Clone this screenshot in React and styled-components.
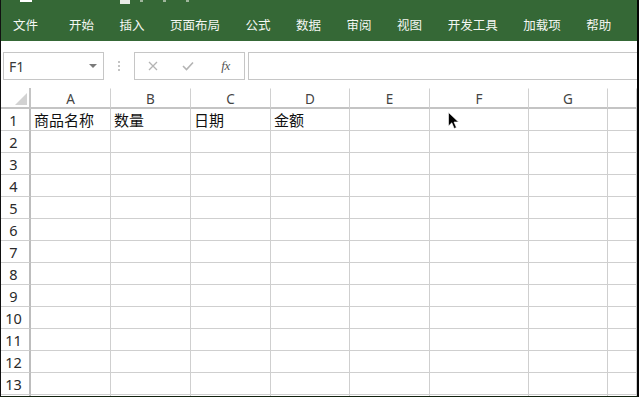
import React from "react";
import styled, { createGlobalStyle } from "styled-components";

const Global = createGlobalStyle`
  *, *::before, *::after { box-sizing: border-box; }
  html, body { margin: 0; padding: 0; background: #fff; overflow: hidden; }
  body { font-family: "Noto Sans", "Noto Sans CJK SC", sans-serif; }
`;

const Frame = styled.div`
  position: relative;
  width: 639px;
  height: 397px;
  overflow: hidden;
  display: flex;
  flex-direction: column;
  border-left: 1px solid #111;
  border-right: 2px solid #050505;
  border-bottom: 1px solid #12220f;
  background: #fff;
`;

const Ribbon = styled.div`
  height: 41px;
  flex: none;
  background: #356836;
  display: flex;
  flex-direction: column;
`;

const Qat = styled.div`
  height: 4px;
  display: flex;
  align-items: flex-start;
  padding-left: 17px;
`;

const QatMark = styled.span`
  display: block;
  width: ${(p) => p.$w}px;
  height: ${(p) => p.$h}px;
  margin-left: ${(p) => p.$ml}px;
  background: ${(p) => p.$c || "#ffffff"};
`;

const Tabs = styled.div`
  flex: 1;
  display: flex;
  align-items: center;
  padding: 4px 0 0 12px;
  gap: 25.5px;
`;

const Tab = styled.span`
  font-family: "Noto Sans CJK SC", sans-serif;
  font-size: 12.5px;
  line-height: 16px;
  color: #f4f7f3;
  white-space: nowrap;
  margin-right: ${(p) => (p.$file ? "5.5px" : "0")};
`;

const FormulaRow = styled.div`
  height: 47px;
  flex: none;
  display: flex;
  align-items: flex-start;
  padding: 11px 0 0 2px;
`;

const NameBox = styled.div`
  width: 101px;
  height: 28px;
  border: 1px solid #c6c6c6;
  display: flex;
  align-items: center;
  justify-content: space-between;
  padding: 0 6px 0 5px;
  font-family: "Noto Sans", sans-serif;
  font-size: 14px;
  color: #3a3a3a;
`;

const Caret = styled.span`
  width: 0;
  height: 0;
  border-left: 4px solid transparent;
  border-right: 4px solid transparent;
  border-top: 4px solid #7a7a7a;
`;

const Dots = styled.div`
  width: 30px;
  height: 28px;
  display: flex;
  flex-direction: column;
  align-items: center;
  justify-content: center;
  gap: 2px;
`;

const Dot = styled.span`
  width: 2px;
  height: 2px;
  background: #c4c4c4;
`;

const FxBox = styled.div`
  width: 111px;
  height: 28px;
  border: 1px solid #c6c6c6;
  display: flex;
  align-items: center;
  padding-left: 12px;
`;

const FxButton = styled.span`
  width: ${(p) => p.$w}px;
  display: flex;
  justify-content: center;
  align-items: center;
`;

const FxText = styled.span`
  font-family: "Liberation Serif", serif;
  font-style: italic;
  font-size: 13px;
  color: #555;
  letter-spacing: -0.5px;
`;

const FormulaInput = styled.div`
  flex: 1;
  height: 28px;
  margin-left: 3px;
  border: 1px solid #c6c6c6;
  border-right: none;
`;

const Sheet = styled.div`
  flex: none;
  display: grid;
  grid-template-columns: 30px 80px 80px 80px 79px 80px 99px 79px 1fr;
  grid-template-rows: 21px repeat(14, 22px);
`;

const Corner = styled.div`
  border-right: 2px solid #c4c4c4;
  border-bottom: 2px solid #c4c4c4;
  display: flex;
  align-items: flex-end;
  justify-content: flex-end;
  padding: 0 2px 2px 0;
`;

const ColHead = styled.div`
  border-right: 1px solid #d0d0d0;
  border-bottom: 2px solid #c4c4c4;
  border-top: 1px solid #fff;
  display: flex;
  align-items: center;
  justify-content: center;
  font-family: "Noto Sans", sans-serif;
  font-size: 13.5px;
  color: #444;
  padding-top: 1px;
`;

const RowHead = styled.div`
  border-right: 2px solid #bdbdbd;
  border-bottom: 1px solid #cfcfcf;
  display: flex;
  align-items: center;
  justify-content: center;
  padding-right: 3px;
  font-family: "Noto Sans", sans-serif;
  font-size: 14.5px;
  color: #2a2a2a;
`;

const Cell = styled.div`
  border-right: 1px solid #cfcfcf;
  border-bottom: 1px solid #cfcfcf;
  display: flex;
  align-items: center;
  padding-left: 3px;
  font-family: "Noto Sans CJK SC", sans-serif;
  font-size: 15px;
  color: #111;
  white-space: nowrap;
  overflow: hidden;
`;

const Pointer = styled.svg`
  position: absolute;
  left: 447px;
  top: 112px;
`;

const columns = ["A", "B", "C", "D", "E", "F", "G", ""];
const firstRow = ["商品名称", "数量", "日期", "金额", "", "", "", ""];
const tabs = ["文件", "开始", "插入", "页面布局", "公式", "数据", "审阅", "视图", "开发工具", "加载项", "帮助"];

export default function App() {
  const rows = Array.from({ length: 14 }, (_, i) => i + 1);
  return (
    <>
      <Global />
      <Frame>
        <Ribbon>
          <Qat>
            <QatMark $w={12} $h={2} $ml={2} />
            <QatMark $w={10} $h={4} $ml={88} $c="#e8ece6" />
            <QatMark $w={3} $h={2} $ml={10} $c="#9fb59c" />
            <QatMark $w={3} $h={2} $ml={20} $c="#9fb59c" />
            <QatMark $w={3} $h={2} $ml={20} $c="#9fb59c" />
          </Qat>
          <Tabs>
            {tabs.map((t, i) => (
              <Tab key={t} $file={i === 0}>{t}</Tab>
            ))}
          </Tabs>
        </Ribbon>

        <FormulaRow>
          <NameBox>
            <span>F1</span>
            <Caret />
          </NameBox>
          <Dots>
            <Dot />
            <Dot />
            <Dot />
          </Dots>
          <FxBox>
            <FxButton $w={12}>
              <svg width="10" height="10" viewBox="0 0 10 10">
                <path d="M1 1 L9 9 M9 1 L1 9" stroke="#b4b4b4" strokeWidth="1.3" fill="none" />
              </svg>
            </FxButton>
            <FxButton $w={58}>
              <svg width="12" height="10" viewBox="0 0 12 10">
                <path d="M1 5 L4.5 8.5 L11 1.5" stroke="#b4b4b4" strokeWidth="1.6" fill="none" />
              </svg>
            </FxButton>
            <FxButton $w={17}>
              <FxText>fx</FxText>
            </FxButton>
          </FxBox>
          <FormulaInput />
        </FormulaRow>

        <Sheet>
          <Corner>
            <svg width="12" height="12" viewBox="0 0 12 12">
              <path d="M12 0 L12 12 L0 12 Z" fill="#d2d2d2" />
            </svg>
          </Corner>
          {columns.map((c, i) => (
            <ColHead key={"h" + i}>{c}</ColHead>
          ))}
          {rows.map((r) => (
            <React.Fragment key={r}>
              <RowHead>{r <= 13 ? r : ""}</RowHead>
              {columns.map((_, ci) => (
                <Cell key={ci}>{r === 1 ? firstRow[ci] : ""}</Cell>
              ))}
            </React.Fragment>
          ))}
        </Sheet>

        <Pointer width="12" height="18" viewBox="0 0 12 18">
          <path d="M0.5 0.5 L0.5 14 L3.8 10.8 L6.2 16.5 L8.4 15.6 L6 10 L10.5 10 Z" fill="#000" stroke="#fff" strokeWidth="0.6" />
        </Pointer>
      </Frame>
    </>
  );
}
